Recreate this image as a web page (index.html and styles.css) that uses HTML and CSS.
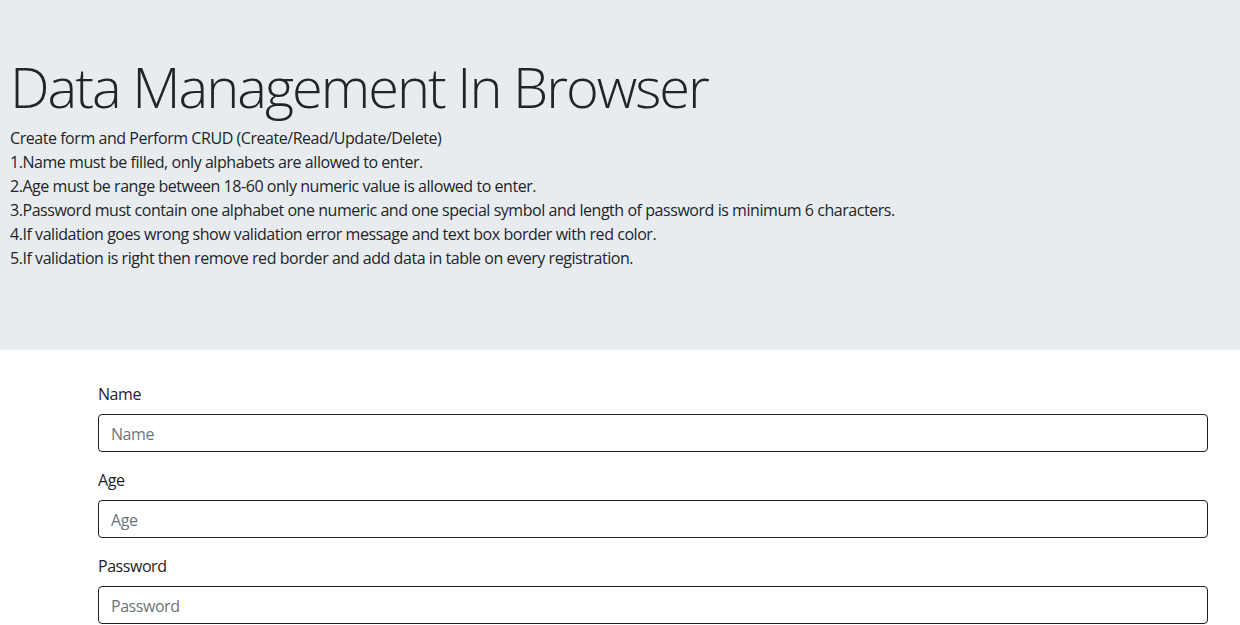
FILE: index.html
```html
<!DOCTYPE html>
<html lang="en">
<head>
<meta charset="utf-8">
<title>Data Management In Browser</title>
<link rel="stylesheet" href="styles.css">
</head>
<body>
<header class="jumbotron">
  <h1 class="display">Data Management In Browser</h1>
  <p class="lead-text">Create form and Perform CRUD (Create/Read/Update/Delete)<br>
  1.Name must be filled, only alphabets are allowed to enter.<br>
  2.Age must be range between 18-60 only numeric value is allowed to enter.<br>
  3.Password must contain one alphabet one numeric and one special symbol and length of password is minimum 6 characters.<br>
  4.If validation goes wrong show validation error message and text box border with red color.<br>
  5.If validation is right then remove red border and add data in table on every registration.</p>
</header>
<form class="form">
  <div class="form-group">
    <label class="label" for="name">Name</label>
    <input class="input" id="name" type="text" placeholder="Name">
  </div>
  <div class="form-group">
    <label class="label" for="age">Age</label>
    <input class="input" id="age" type="text" placeholder="Age">
  </div>
  <div class="form-group">
    <label class="label" for="password">Password</label>
    <input class="input" id="password" type="password" placeholder="Password">
  </div>
</form>
</body>
</html>
```

FILE: styles.css
```css
html, body {
  margin: 0;
  padding: 0;
}
body {
  font-family: "Open Sans", "Noto Sans", sans-serif;
  font-size: 16px;
  line-height: 24px;
  letter-spacing: -0.45px;
  color: #212529;
  background: #fff;
}
.jumbotron {
  background: #e9ecef;
  height: 350px;
  box-sizing: border-box;
  padding: 53px 10px 0;
  margin: 0 0 32px;
}
.display {
  margin: 0 0 6px;
  font-size: 56px;
  font-weight: 300;
  line-height: 67px;
  letter-spacing: -2px;
}
.lead-text {
  margin: 0;
}
.form {
  padding: 0 32px 0 98px;
}
.form-group {
  display: flex;
  flex-direction: column;
  margin-bottom: 16px;
}
.label {
  margin-bottom: 8px;
}
.input {
  height: 38px;
  box-sizing: border-box;
  padding: 7px 12px 5px;
  font: inherit;
  font-size: 16px;
  letter-spacing: -0.45px;
  color: #495057;
  border: 1px solid #1e1e1e;
  border-radius: 4px;
  background: #fff;
  outline: none;
}
.input::placeholder {
  color: #6c757d;
}
```
